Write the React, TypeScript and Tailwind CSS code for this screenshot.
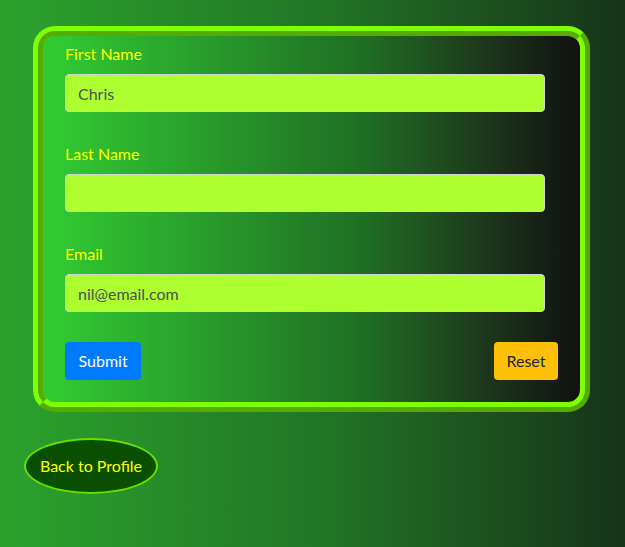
import React, { useState } from "react";

const font = { fontFamily: '"Segoe UI", Lato, "Liberation Sans", sans-serif' };

function Field({
  label,
  value,
  onChange,
}: {
  label: string;
  value: string;
  onChange: (v: string) => void;
}) {
  return (
    <div className="flex flex-col">
      <label className="text-base leading-6 text-[#ffff00] mb-2">{label}</label>
      <input
        value={value}
        onChange={(e) => onChange(e.target.value)}
        className="w-[480px] h-[38px] px-3 rounded border border-[#ced4da] bg-[#adff2f] text-base text-[#495057] outline-none"
        style={font}
      />
    </div>
  );
}

export default function App() {
  const [first, setFirst] = useState("Chris");
  const [last, setLast] = useState("");
  const [email, setEmail] = useState("nil@email.com");

  return (
    <div
      className="w-[625px] h-[547px] bg-gradient-to-r from-[#2ca22c] via-[#217826] to-[#163418] pt-[26px] px-6"
      style={font}
    >
      <div className="ml-[9px] w-[557px] h-[386px] rounded-[22px] border-[10px] [border-style:ridge] border-[#7fff00] bg-gradient-to-r from-[#32cd32] via-[#1f6e23] via-60% to-[#111111] pt-[6px] pl-[22px] pr-[22px]">
        <form className="flex flex-col gap-[30px]" onSubmit={(e) => e.preventDefault()}>
          <Field label="First Name" value={first} onChange={setFirst} />
          <Field label="Last Name" value={last} onChange={setLast} />
          <Field label="Email" value={email} onChange={setEmail} />
          <div className="flex justify-between">
            <button
              type="submit"
              className="h-[38px] px-[13.5px] rounded bg-[#007bff] text-white text-base"
            >
              Submit
            </button>
            <button
              type="button"
              onClick={() => {
                setFirst("");
                setLast("");
                setEmail("");
              }}
              className="h-[38px] px-[12.5px] rounded bg-[#ffc107] text-[#212529] text-base"
            >
              Reset
            </button>
          </div>
        </form>
      </div>
      <div className="mt-[26px]">
        <button className="w-[134px] h-[56px] rounded-[50%] border-2 border-[#66e000] bg-[#0a5000] text-[#ffff00] text-base">
          Back to Profile
        </button>
      </div>
    </div>
  );
}
